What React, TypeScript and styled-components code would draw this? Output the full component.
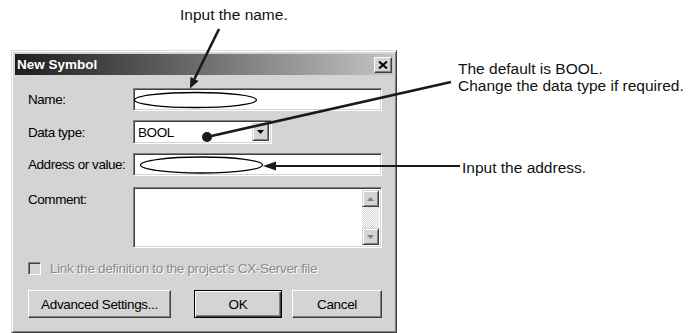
import React from "react";
import styled, { createGlobalStyle } from "styled-components";

const Global = createGlobalStyle`
  html, body { margin: 0; padding: 0; background: #fff; }
  body { width: 691px; height: 333px; overflow: hidden; }
`;

const UI = `"Liberation Sans", Arial, sans-serif`;
const NOTE = `"Liberation Sans", Arial, Helvetica, sans-serif`;

const FACE = "#d4d4d4";

const uiText = `
  font-family: ${UI};
  font-size: 13.5px;
  line-height: 17px;
  letter-spacing: -0.45px;
`;

const Figure = styled.div`
  position: relative;
  width: 691px;
  height: 333px;
  background: #fff;
  display: flex;
  flex-direction: column;
`;

const TopCaption = styled.div`
  height: 50px;
  box-sizing: border-box;
  padding: 6px 0 0 180px;
  font: 15.5px/18px ${NOTE};
  color: #111;
`;

const Row = styled.div`
  display: flex;
  flex: 1;
`;

const Dialog = styled.div`
  margin-left: 11px;
  width: 386px;
  height: 283px;
  box-sizing: border-box;
  background: ${FACE};
  border: 1px solid;
  border-color: #dcdcdc #404040 #404040 #dcdcdc;
  box-shadow: inset 1px 1px #fff, inset -1px -1px #808080;
  padding: 3px;
  display: flex;
  flex-direction: column;
`;

const TitleBar = styled.div`
  height: 21px;
  flex: none;
  display: flex;
  align-items: center;
  justify-content: space-between;
  padding: 0 1px 0 2px;
  background: linear-gradient(to right, #1e1e1e 0%, #555 35%, #c4c4c4 100%);
`;

const TitleText = styled.span`
  font: bold 13.5px/21px "Liberation Sans", Arial, sans-serif;
  color: #fff;
`;

const CloseBtn = styled.div`
  width: 18px;
  height: 16px;
  box-sizing: border-box;
  background: ${FACE};
  border: 1px solid;
  border-color: #fff #404040 #404040 #fff;
  box-shadow: inset -1px -1px #808080;
  display: flex;
  align-items: center;
  justify-content: center;
  margin-top: 1px;
`;

const Body = styled.div`
  flex: 1;
  display: flex;
  flex-direction: column;
  padding: 13px 11px 9px 13px;
`;

const FormGrid = styled.div`
  display: grid;
  grid-template-columns: 105px 249px;
  grid-template-rows: 23px 24px 23px 63px;
  row-gap: 9px;
`;

const Label = styled.div<{ $top?: boolean }>`
  ${uiText}
  color: #000;
  white-space: nowrap;
  align-self: ${(p) => (p.$top ? "start" : "center")};
  margin-top: ${(p) => (p.$top ? "6px" : "0")};
`;

const Sunken = styled.div<{ $w?: number; $mt?: number }>`
  box-sizing: border-box;
  width: ${(p) => (p.$w ? `${p.$w}px` : "100%")};
  margin-top: ${(p) => p.$mt ?? 0}px;
  background: #fff;
  border: 1px solid;
  border-color: #808080 #fff #fff #808080;
  box-shadow: inset 1px 1px #404040, inset -1px -1px ${FACE};
  padding: 2px;
  display: flex;
  align-items: center;
`;

const ComboText = styled.span`
  flex: 1;
  ${uiText}
  letter-spacing: -0.4px;
  color: #000;
  padding-left: 2px;
`;

const DropBtn = styled.div`
  width: 17px;
  height: 18px;
  box-sizing: border-box;
  background: ${FACE};
  border: 1px solid;
  border-color: ${FACE} #404040 #404040 ${FACE};
  box-shadow: inset 1px 1px #fff, inset -1px -1px #808080;
  display: flex;
  align-items: center;
  justify-content: center;
`;

const TextArea = styled(Sunken)`
  align-items: stretch;
  justify-content: flex-end;
  padding: 2px;
`;

const ScrollBar = styled.div`
  width: 17px;
  display: flex;
  flex-direction: column;
`;

const ScrollBtn = styled.div`
  height: 17px;
  flex: none;
  box-sizing: border-box;
  background: ${FACE};
  border: 1px solid;
  border-color: ${FACE} #404040 #404040 ${FACE};
  box-shadow: inset 1px 1px #fff, inset -1px -1px #808080;
  display: flex;
  align-items: center;
  justify-content: center;
`;

const ScrollTrack = styled.div`
  flex: 1;
  background: repeating-conic-gradient(#fff 0 25%, ${FACE} 0 50%) 0 0 / 2px 2px;
`;

const CheckRow = styled.div`
  display: flex;
  align-items: center;
  gap: 9px;
  margin-top: 13px;
  height: 15px;
`;

const CheckBox = styled.div`
  width: 13px;
  height: 13px;
  box-sizing: border-box;
  background: ${FACE};
  border: 1px solid;
  border-color: #808080 #fff #fff #808080;
  box-shadow: inset 1px 1px #404040, inset -1px -1px ${FACE};
`;

const CheckLabel = styled.span`
  ${uiText}
  letter-spacing: -0.33px;
  color: #8a8a8a;
  text-shadow: 1px 1px #fff;
  white-space: nowrap;
`;

const ButtonRow = styled.div`
  display: flex;
  margin-top: 14px;
`;

const Button = styled.div<{ $w: number; $mr?: number; $default?: boolean }>`
  width: ${(p) => p.$w}px;
  margin-right: ${(p) => p.$mr ?? 0}px;
  height: 28px;
  box-sizing: border-box;
  background: ${FACE};
  border: 1px solid;
  border-color: ${(p) => (p.$default ? "#000" : "#fff #404040 #404040 #fff")};
  box-shadow: ${(p) =>
    p.$default
      ? "inset 1px 1px #fff, inset -1px -1px #404040, inset -2px -2px #808080"
      : "inset -1px -1px #808080"};
  display: flex;
  align-items: center;
  justify-content: center;
  ${uiText}
  letter-spacing: -0.35px;
  color: #000;
`;

const Notes = styled.div`
  margin-left: 61px;
  padding-top: 10px;
  display: flex;
  flex-direction: column;
`;

const Note = styled.div<{ $mt?: number; $pl?: number }>`
  font: 15.5px/17px ${NOTE};
  color: #111;
  white-space: nowrap;
  margin-top: ${(p) => p.$mt ?? 0}px;
  padding-left: ${(p) => p.$pl ?? 0}px;
`;

const Overlay = styled.svg`
  position: absolute;
  left: 0;
  top: 0;
  width: 691px;
  height: 333px;
  pointer-events: none;
`;

const Tri = ({ up }: { up: boolean }) => (
  <svg width="7" height="4" viewBox="0 0 7 4">
    <polygon points={up ? "3.5,0 7,4 0,4" : "0,0 7,0 3.5,4"} fill="#808080" />
  </svg>
);

export default function App() {
  return (
    <>
      <Global />
      <Figure>
        <TopCaption>Input the name.</TopCaption>
        <Row>
          <Dialog>
            <TitleBar>
              <TitleText>New Symbol</TitleText>
              <CloseBtn>
                <svg width="10" height="8" viewBox="0 0 10 8">
                  <path d="M1 0.5 L9 7.5 M9 0.5 L1 7.5" stroke="#000" strokeWidth="2" />
                </svg>
              </CloseBtn>
            </TitleBar>
            <Body>
              <FormGrid>
                <Label>Name:</Label>
                <Sunken />
                <Label>Data type:</Label>
                <Sunken $w={139}>
                  <ComboText>BOOL</ComboText>
                  <DropBtn>
                    <svg width="7" height="4" viewBox="0 0 7 4">
                      <polygon points="0,0 7,0 3.5,4" fill="#000" />
                    </svg>
                  </DropBtn>
                </Sunken>
                <Label>Address or value:</Label>
                <Sunken />
                <Label $top>Comment:</Label>
                <TextArea $mt={2}>
                  <ScrollBar>
                    <ScrollBtn>
                      <Tri up />
                    </ScrollBtn>
                    <ScrollTrack />
                    <ScrollBtn>
                      <Tri up={false} />
                    </ScrollBtn>
                  </ScrollBar>
                </TextArea>
              </FormGrid>
              <CheckRow>
                <CheckBox />
                <CheckLabel>Link the definition to the project's CX-Server file</CheckLabel>
              </CheckRow>
              <ButtonRow>
                <Button $w={143} $mr={23}>Advanced Settings...</Button>
                <Button $w={88} $mr={10} $default>OK</Button>
                <Button $w={90}>Cancel</Button>
              </ButtonRow>
            </Body>
          </Dialog>
          <Notes>
            <Note>
              The default is BOOL.
              <br />
              Change the data type if required.
            </Note>
            <Note $mt={65} $pl={4}>Input the address.</Note>
          </Notes>
        </Row>
        <Overlay viewBox="0 0 691 333">
          <ellipse cx="195.5" cy="100" rx="61" ry="7.5" fill="#fff" stroke="#000" strokeWidth="1.3" />
          <ellipse cx="201.5" cy="165" rx="61" ry="8" fill="#fff" stroke="#000" strokeWidth="1.3" />
          <line x1="219" y1="29" x2="194.4" y2="79" stroke="#1a1a1a" strokeWidth="2.6" />
          <polygon points="190,88.5 198.6,81 190.4,77" fill="#1a1a1a" />
          <line x1="451" y1="82" x2="207" y2="137" stroke="#1a1a1a" strokeWidth="2.6" />
          <circle cx="207" cy="137" r="5" fill="#1a1a1a" />
          <line x1="460" y1="166" x2="274" y2="166" stroke="#1a1a1a" strokeWidth="2" />
          <polygon points="263,166 276,161.5 276,170.5" fill="#1a1a1a" />
        </Overlay>
      </Figure>
    </>
  );
}
